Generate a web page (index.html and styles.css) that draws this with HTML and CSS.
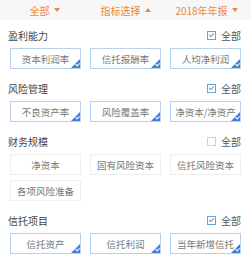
FILE: index.html
```html
<!DOCTYPE html>
<html lang="zh-CN">
<head>
    <meta charset="UTF-8">
    <meta name="viewport" content="width=device-width, initial-scale=1.0">
    <title>指标选择</title>
    <link rel="stylesheet" href="styles.css">
</head>
<body>
    <div class="tabs">
        <div class="tab">全部 <span class="caret down"></span></div>
        <div class="tab">指标选择 <span class="caret up"></span></div>
        <div class="tab">2018年年报 <span class="caret down"></span></div>
    </div>

    <div class="section">
        <div class="section-head">
            <span class="title">盈利能力</span>
            <span class="all"><span class="check on"></span>全部</span>
        </div>
        <div class="items">
            <div class="item on">资本利润率</div>
            <div class="item on">信托报酬率</div>
            <div class="item on">人均净利润</div>
        </div>
    </div>

    <div class="section">
        <div class="section-head">
            <span class="title">风险管理</span>
            <span class="all"><span class="check on"></span>全部</span>
        </div>
        <div class="items">
            <div class="item on">不良资产率</div>
            <div class="item on">风险覆盖率</div>
            <div class="item on">净资本/净资产</div>
        </div>
    </div>

    <div class="section">
        <div class="section-head">
            <span class="title">财务规模</span>
            <span class="all"><span class="check"></span>全部</span>
        </div>
        <div class="items">
            <div class="item">净资本</div>
            <div class="item">固有风险资本</div>
            <div class="item">信托风险资本</div>
            <div class="item">各项风险准备</div>
        </div>
    </div>

    <div class="section">
        <div class="section-head">
            <span class="title">信托项目</span>
            <span class="all"><span class="check on"></span>全部</span>
        </div>
        <div class="items">
            <div class="item on">信托资产</div>
            <div class="item on">信托利润</div>
            <div class="item on">当年新增信托</div>
        </div>
    </div>
</body>
</html>
```

FILE: styles.css
```css
body {
    margin: 0;
    font-family: "Noto Sans CJK SC", "Noto Sans", sans-serif;
    background-color: #ffffff;
    color: #333333;
}
.tabs {
    display: grid;
    grid-template-columns: 1fr 1fr 1fr;
    height: 20px;
    background-color: #f7f7f7;
    padding: 0 4px;
}
.tab {
    display: flex;
    align-items: center;
    justify-content: center;
    gap: 4px;
    font-size: 10px;
    color: #e8893c;
}
.caret {
    width: 0;
    height: 0;
    border-left: 3.5px solid transparent;
    border-right: 3.5px solid transparent;
}
.caret.down {
    border-top: 4px solid #e8893c;
}
.caret.up {
    border-bottom: 4px solid #e8893c;
}
.section {
    padding: 8px 10px 4px 10px;
}
.section-head {
    display: flex;
    justify-content: space-between;
    align-items: center;
    height: 14px;
    margin-bottom: 6px;
    font-size: 10px;
}
.title {
    color: #444444;
    margin-left: -2px;
}
.all {
    display: flex;
    align-items: center;
    gap: 5px;
    color: #555555;
}
.check {
    position: relative;
    box-sizing: border-box;
    width: 9px;
    height: 9px;
    border: 1px solid #d0d0d0;
    background-color: #ffffff;
}
.check.on {
    border-color: #6a9fe0;
}
.check.on::after {
    content: "";
    position: absolute;
    left: 2px;
    top: 0px;
    width: 2px;
    height: 4px;
    border-right: 1px solid #6a9fe0;
    border-bottom: 1px solid #6a9fe0;
    transform: rotate(45deg);
}
.items {
    display: grid;
    grid-template-columns: 1fr 1fr 1fr;
    column-gap: 9px;
    row-gap: 5px;
}
.item {
    position: relative;
    overflow: hidden;
    box-sizing: border-box;
    height: 21px;
    display: flex;
    align-items: center;
    justify-content: center;
    border: 1px solid #efefef;
    font-size: 9.5px;
    color: #777777;
    white-space: nowrap;
}
.item.on {
    border-color: #b9d1ee;
}
.item.on::before {
    content: "";
    position: absolute;
    right: 0;
    bottom: 0;
    width: 0;
    height: 0;
    border-left: 9px solid transparent;
    border-bottom: 9px solid #3f80d6;
}
.item.on::after {
    content: "";
    position: absolute;
    right: 1px;
    bottom: 2px;
    width: 2px;
    height: 3px;
    border-right: 1px solid #ffffff;
    border-bottom: 1px solid #ffffff;
    transform: rotate(45deg);
}
```
